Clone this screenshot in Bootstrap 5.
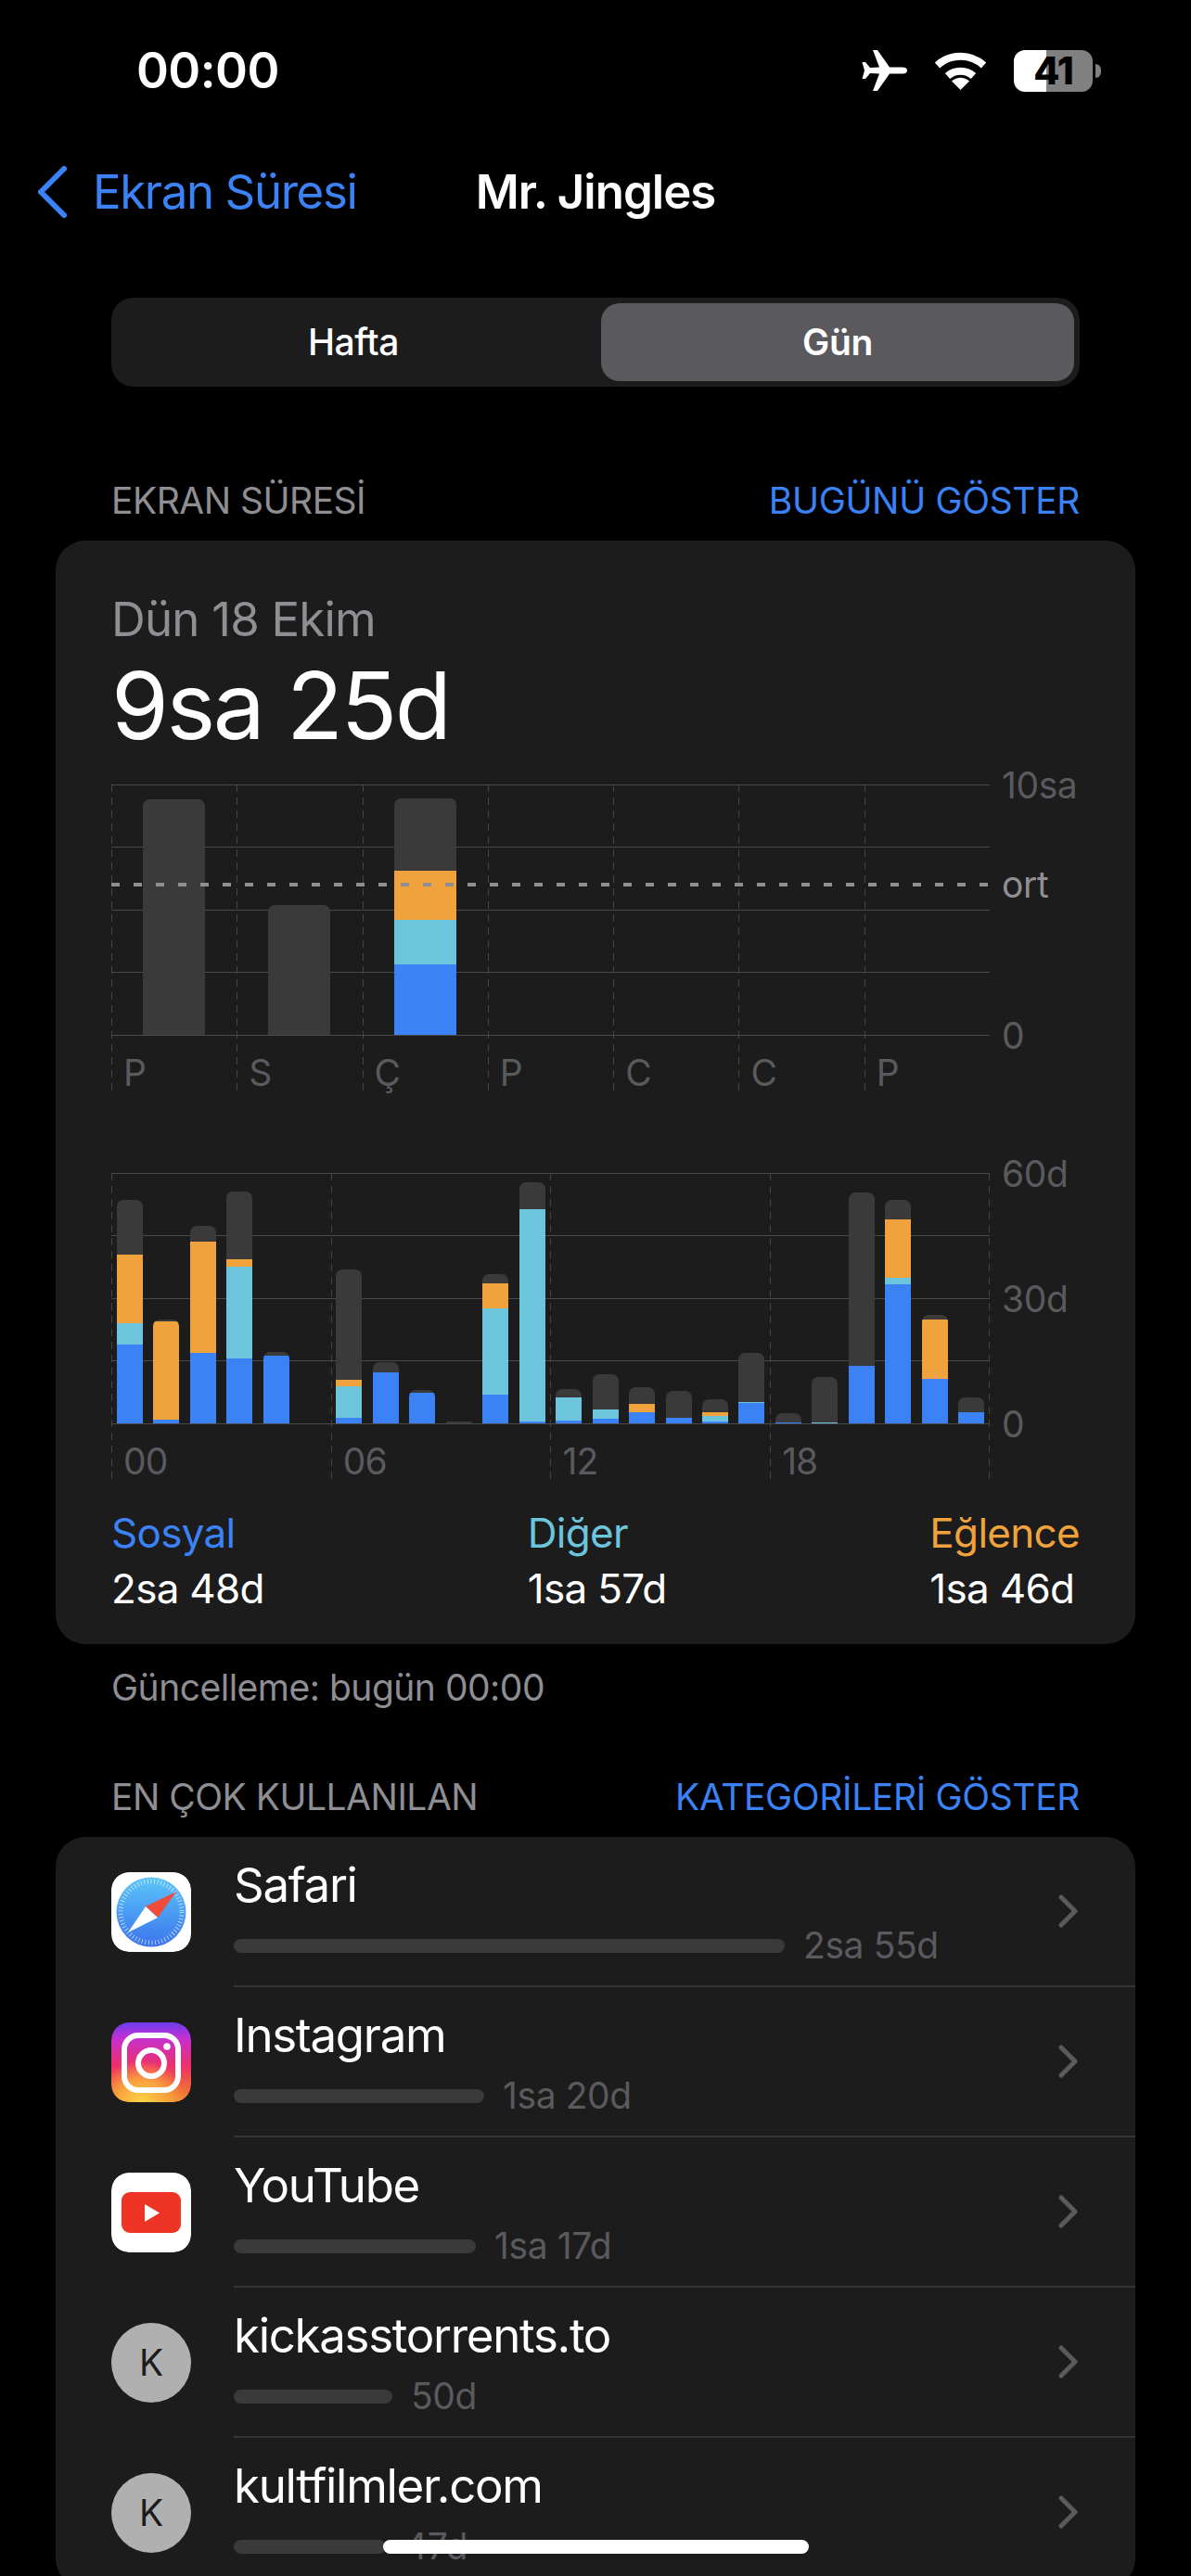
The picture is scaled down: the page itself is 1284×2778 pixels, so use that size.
<!DOCTYPE html>
<html lang="tr">
<head>
  <meta charset="UTF-8">
  <meta name="viewport" content="width=device-width, initial-scale=1.0">
  <title>Ekran Süresi</title>
  <link href="https://cdn.jsdelivr.net/npm/bootstrap@5.3.0/dist/css/bootstrap.min.css" rel="stylesheet">
  <style>
    body { background: #000; font-family: Inter, "Liberation Sans", sans-serif; color: #fff; }
    .screen { width: 1284px; height: 2778px; overflow: hidden; position: relative; }

    .status-row { height: 152px; padding: 0 97px 0 147px; }
    .clock { font-size: 53px; font-weight: 600; letter-spacing: -.6px; line-height: 1; }
    .status-icons { gap: 29px; }
    .batt-wrap { gap: 3px; }
    .batt { width: 85px; height: 45px; border-radius: 12px; background: linear-gradient(to right, #fff 41%, #808080 41%); color: #000; font-size: 41px; font-weight: 800; letter-spacing: -1px; line-height: 45px; text-align: center; }
    .batt-cap { width: 6px; height: 15px; border-radius: 0 8px 8px 0; background: #808080; }

    .top-nav { height: 110px; display: grid; grid-template-columns: 1fr auto 1fr; align-items: center; padding: 0 41px; font-size: 51px; letter-spacing: -1px; }
    .back-link { color: #3b82f7; text-decoration: none; gap: 28px; letter-spacing: -1.4px; }
    .nav-title { font-weight: 600; }

    .seg { margin: 59px 120px 0; height: 96px; padding: 6px; background: #1c1c1c; border-radius: 24px; }
    .seg .nav-item { width: 510px; }
    .seg .nav-link { height: 84px; line-height: 84px; padding: 0; color: #fff; font-size: 39px; font-weight: 500; letter-spacing: -.4px; border-radius: 20px; }
    .seg .nav-link.active { background: #5a5a5e; color: #fff; font-weight: 600; }

    .sec-head { margin: 98px 120px 0; height: 50px; font-size: 39px; line-height: 50px; letter-spacing: -.5px; color: #8e8e93; }
    .sec-head a { color: #3b82f7; text-decoration: none; letter-spacing: -.35px; }
    .sec-head.second { margin-top: 68px; }

    .panel { margin: 18px 60px 0; background: #1c1c1c; border: 0; border-radius: 32px; }
    .panel-stats { height: 1190px; padding: 55px 60px 0; }
    .date-line { font-size: 51px; line-height: 60px; color: #8e8e93; letter-spacing: -.8px; }
    .total-line { font-size: 100px; line-height: 110px; margin-top: 8px; font-weight: 400; letter-spacing: -2.5px; }

    .chart { height: 330px; }
    .chart-day { margin-top: 30px; }
    .chart-hour { margin-top: 89px; }
    .plot { width: 947px; height: 330px; background: repeating-linear-gradient(to bottom, #4a4a4c 0 1px, transparent 1px 67.5px) top left / 100% 271px no-repeat; position: relative; }
    .tick { flex: 1 1 0; min-width: 0; height: 330px; }
    .tick-line { background: repeating-linear-gradient(to bottom, #444 0 8px, transparent 8px 14px) left top / 1px 100% no-repeat; }
    .plot-end { background: repeating-linear-gradient(to bottom, #444 0 8px, transparent 8px 14px) right top / 1px 100% no-repeat; }
    .tick-line.plot-end { background-position: left top, right top; }
    .tick-area { height: 270px; }
    .bar { border-radius: 7px 7px 0 0; overflow: hidden; }
    .chart-day .bar { width: 67px; }
    .chart-hour .bar { width: 28px; }
    .tick-label { padding-left: 13px; margin-top: 17px; font-size: 39px; line-height: 48px; color: #5a5a5e; white-space: nowrap; letter-spacing: -.9px; }
    .avg-line { position: absolute; left: 0; right: 0; top: 106px; height: 4px; background: repeating-linear-gradient(to right, #8e8e93 0 9px, transparent 9px 24px); }
    .axis { height: 272px; padding-left: 13px; font-size: 39px; color: #5a5a5e; letter-spacing: -.4px; }
    .axis span { display: block; height: 2px; line-height: 2px; white-space: nowrap; }
    .axis .ort { margin-top: 105px; color: #8e8e93; }
    .axis .axis-end { margin-top: auto; }

    .legend { margin-top: 30px; font-size: 44px; line-height: 56px; letter-spacing: -.7px; }
    .legend-val { margin-top: 4px; }
    .c-blue { color: #3b82f7; }
    .c-cyan { color: #6cc5dc; }
    .c-orange { color: #f0a33c; }
    .s-blue { background: #3b82f7; }
    .s-cyan { background: #6cc5dc; }
    .s-orange { background: #f0a33c; }
    .s-gray { background: #3a3a3a; }

    .update-note { margin: 22px 120px 0; font-size: 39px; line-height: 50px; letter-spacing: -.5px; color: #8e8e93; }

    .apps { --bs-list-group-bg: transparent; --bs-list-group-border-width: 0; --bs-list-group-color: #fff; }
    .app-row { display: flex; padding: 0 0 0 60px; gap: 46px; }
    .app-icon { width: 86px; height: 86px; flex: none; margin-top: 38px; border-radius: 19px; display: block; }
    .avatar { width: 86px; height: 86px; flex: none; margin-top: 38px; border-radius: 50%; background: #b0b0b0; color: #1c1c1c; font-size: 39px; line-height: 86px; text-align: center; }
    .app-body { flex: 1; height: 162px; padding-right: 62px; border-bottom: 2px solid #353535; }
    .app-name { font-size: 51px; line-height: 60px; margin-top: 22px; letter-spacing: -1.3px; }
    .app-meter { height: 40px; margin-top: 15px; gap: 20px; font-size: 39px; color: #5a5a5e; letter-spacing: -.4px; }
    .meter-bar { height: 15px; background: #3a3a3a; border-radius: 8px; }

    .home-bar { position: absolute; left: 413px; top: 2739px; width: 459px; height: 15px; border-radius: 8px; background: #fff; }
  </style>
</head>
<body>
  <div class="screen">
    <div class="status-row d-flex justify-content-between align-items-center">
      <div class="clock">00:00</div>
      <div class="status-icons d-flex align-items-center">
        <svg width="49" height="44" viewBox="0 0 49 44"><path fill="#fff" d="M49 22C49 25 46 25.5 43 25.5L30 25.5L17 44L12 44L19 25.5L9 25L4 31L.5 31L3 22L.5 13L4 13L9 19L19 18.5L12 0L17 0L30 18.5L43 18.5C46 18.5 49 19 49 22Z"/></svg>
        <svg width="57" height="42" viewBox="0 0 57 42"><path fill="none" stroke="#fff" stroke-width="8" d="M3.500 15.500A37 37 0 0 1 53.500 15.500"/><path fill="none" stroke="#fff" stroke-width="8" d="M14.500 27A21 21 0 0 1 42.500 27"/><path fill="#fff" d="M28.500 42L19 32.500Q28.500 25 38 32.500Z"/></svg>
        <div class="batt-wrap d-flex align-items-center">
          <div class="batt">41</div>
          <div class="batt-cap"></div>
        </div>
      </div>
    </div>

    <nav class="top-nav">
      <a class="back-link d-flex align-items-center" href="#">
        <svg width="31" height="56" viewBox="0 0 31 56"><path fill="none" stroke="#3b82f7" stroke-width="6" stroke-linecap="round" stroke-linejoin="round" d="M28 3L3 28L28 53"/></svg>
        <span>Ekran Süresi</span>
      </a>
      <div class="nav-title">Mr. Jingles</div>
      <div></div>
    </nav>

    <ul class="seg nav nav-pills text-center justify-content-between">
      <li class="nav-item"><a class="nav-link" href="#">Hafta</a></li>
      <li class="nav-item"><a class="nav-link active" href="#">Gün</a></li>
    </ul>

    <div class="sec-head d-flex justify-content-between">
      <span>EKRAN SÜRESİ</span>
      <a href="#">BUGÜNÜ GÖSTER</a>
    </div>

    <div class="panel panel-stats card">
      <div class="date-line">Dün 18 Ekim</div>
      <div class="total-line">9sa 25d</div>

      <div class="chart chart-day d-flex">
        <div class="plot" id="dayPlot"></div>
        <div class="axis d-flex flex-column">
          <span>10sa</span>
          <span class="ort">ort</span>
          <span class="axis-end">0</span>
        </div>
      </div>

      <div class="chart chart-hour d-flex">
        <div class="plot" id="hourPlot"></div>
        <div class="axis d-flex flex-column justify-content-between">
          <span>60d</span>
          <span>30d</span>
          <span>0</span>
        </div>
      </div>

      <div class="legend d-flex justify-content-between">
        <div><div class="c-blue">Sosyal</div><div class="legend-val">2sa 48d</div></div>
        <div><div class="c-cyan">Diğer</div><div class="legend-val">1sa 57d</div></div>
        <div><div class="c-orange">Eğlence</div><div class="legend-val">1sa 46d</div></div>
      </div>
    </div>

    <div class="update-note">Güncelleme: bugün 00:00</div>

    <div class="sec-head second d-flex justify-content-between">
      <span>EN ÇOK KULLANILAN</span>
      <a href="#">KATEGORİLERİ GÖSTER</a>
    </div>

    <div class="panel card">
      <div class="apps list-group list-group-flush">
        <div class="app-row list-group-item">
          <svg class="app-icon" viewBox="0 0 86 86">
            <defs><linearGradient id="safBlue" x1="0" y1="0" x2="0" y2="1"><stop offset="0" stop-color="#5cc6fa"/><stop offset="1" stop-color="#3a73ec"/></linearGradient></defs>
            <rect width="86" height="86" rx="19" fill="#fff"/>
            <circle cx="43" cy="43" r="37.500" fill="url(#safBlue)"/>
            <circle cx="43" cy="43" r="33" fill="none" stroke="#fff" stroke-opacity=".75" stroke-width="5" stroke-dasharray=".8 2.800"/>
            <polygon points="70,21 50,49 37,37" fill="#ef4c3c"/>
            <polygon points="18,65 50,49 37,37" fill="#fff"/>
          </svg>
          <div class="app-body d-flex justify-content-between align-items-center">
            <div class="align-self-start"><div class="app-name">Safari</div><div class="app-meter d-flex align-items-center"><div class="meter-bar" style="width:594px"></div><span>2sa 55d</span></div></div>
            <svg width="21" height="36" viewBox="0 0 21 36"><path fill="none" stroke="#5a5a5e" stroke-width="5" stroke-linecap="round" stroke-linejoin="round" d="M3 3L18 18L3 33"/></svg>
          </div>
        </div>
        <div class="app-row list-group-item">
          <svg class="app-icon" viewBox="0 0 86 86">
            <defs>
              <linearGradient id="igBase" x1="0" y1="0" x2="0" y2="1"><stop offset="0" stop-color="#6a3df0"/><stop offset=".2" stop-color="#c62fd0"/><stop offset=".55" stop-color="#ee3068"/><stop offset=".8" stop-color="#f0643c"/><stop offset="1" stop-color="#f28a30"/></linearGradient>
              <radialGradient id="igGlow" cx=".38" cy="1.02" r=".55"><stop offset="0" stop-color="#fbd845"/><stop offset=".55" stop-color="#fbb040" stop-opacity=".8"/><stop offset="1" stop-color="#fbb040" stop-opacity="0"/></radialGradient>
            </defs>
            <rect width="86" height="86" rx="19" fill="url(#igBase)"/>
            <rect width="86" height="86" rx="19" fill="url(#igGlow)"/>
            <rect x="14" y="14" width="58" height="59" rx="15" fill="none" stroke="#fff" stroke-width="6"/>
            <circle cx="43" cy="44" r="14" fill="none" stroke="#fff" stroke-width="6"/>
            <circle cx="60" cy="26" r="3.800" fill="#fff"/>
          </svg>
          <div class="app-body d-flex justify-content-between align-items-center">
            <div class="align-self-start"><div class="app-name">Instagram</div><div class="app-meter d-flex align-items-center"><div class="meter-bar" style="width:270px"></div><span>1sa 20d</span></div></div>
            <svg width="21" height="36" viewBox="0 0 21 36"><path fill="none" stroke="#5a5a5e" stroke-width="5" stroke-linecap="round" stroke-linejoin="round" d="M3 3L18 18L3 33"/></svg>
          </div>
        </div>
        <div class="app-row list-group-item">
          <svg class="app-icon" viewBox="0 0 86 86">
            <rect width="86" height="86" rx="19" fill="#fff"/>
            <rect x="11" y="21" width="64" height="44" rx="9" fill="#ee3424"/>
            <polygon points="36,34 36,53 52,43.500" fill="#fff"/>
          </svg>
          <div class="app-body d-flex justify-content-between align-items-center">
            <div class="align-self-start"><div class="app-name">YouTube</div><div class="app-meter d-flex align-items-center"><div class="meter-bar" style="width:261px"></div><span>1sa 17d</span></div></div>
            <svg width="21" height="36" viewBox="0 0 21 36"><path fill="none" stroke="#5a5a5e" stroke-width="5" stroke-linecap="round" stroke-linejoin="round" d="M3 3L18 18L3 33"/></svg>
          </div>
        </div>
        <div class="app-row list-group-item">
          <div class="avatar">K</div>
          <div class="app-body d-flex justify-content-between align-items-center">
            <div class="align-self-start"><div class="app-name">kickasstorrents.to</div><div class="app-meter d-flex align-items-center"><div class="meter-bar" style="width:171px"></div><span>50d</span></div></div>
            <svg width="21" height="36" viewBox="0 0 21 36"><path fill="none" stroke="#5a5a5e" stroke-width="5" stroke-linecap="round" stroke-linejoin="round" d="M3 3L18 18L3 33"/></svg>
          </div>
        </div>
        <div class="app-row list-group-item">
          <div class="avatar">K</div>
          <div class="app-body d-flex justify-content-between align-items-center">
            <div class="align-self-start"><div class="app-name">kultfilmler.com</div><div class="app-meter d-flex align-items-center"><div class="meter-bar" style="width:164px"></div><span>47d</span></div></div>
            <svg width="21" height="36" viewBox="0 0 21 36"><path fill="none" stroke="#5a5a5e" stroke-width="5" stroke-linecap="round" stroke-linejoin="round" d="M3 3L18 18L3 33"/></svg>
          </div>
        </div>
      </div>
    </div>

    <div class="home-bar"></div>
  </div>

  <script src="https://cdn.jsdelivr.net/npm/bootstrap@5.3.0/dist/js/bootstrap.bundle.min.js"></script>
  <script>
    document.addEventListener('DOMContentLoaded', function() {
      const segClasses = ['s-blue', 's-cyan', 's-orange', 's-gray'];

      // each entry: height in px of blue, cyan, orange, gray
      const days = [
        [0, 0, 0, 254], [0, 0, 0, 140], [76, 48, 53, 78],
        [], [], [], []
      ];
      const dayLabels = ['P', 'S', 'Ç', 'P', 'C', 'C', 'P'];

      // tops of the segments, measured on a 3x crop with baseline at 886
      const hourTops = [
        [630, 562, 339, 162], [873, 873, 555, 549], [657, 657, 297, 246], [675, 378, 354, 135],
        [666, 666, 666, 654], [], [867, 766, 744, 387], [720, 720, 720, 687],
        [786, 786, 786, 777], [886, 886, 886, 879], [792, 514, 432, 402], [879, 192, 192, 105],
        [876, 801, 801, 774], [870, 840, 840, 726], [849, 849, 822, 768], [867, 867, 867, 780],
        [879, 861, 849, 807], [819, 816, 816, 657], [882, 882, 882, 852], [886, 882, 882, 735],
        [699, 699, 699, 138], [435, 414, 225, 162], [741, 741, 549, 534], [849, 849, 849, 801]
      ];
      const hours = hourTops.map(function(tops) {
        let prev = 886;
        return tops.map(function(top) {
          const h = (prev - top) / 3;
          prev = top;
          return h;
        });
      });

      function fillPlot(plot, data, labelAt, lineEvery) {
        data.forEach(function(segs, i) {
          const tick = document.createElement('div');
          tick.className = 'tick';
          if (i % lineEvery === 0) tick.classList.add('tick-line');
          if (i === data.length - 1) tick.classList.add('plot-end');

          const area = document.createElement('div');
          area.className = 'tick-area d-flex justify-content-center align-items-end';
          if (segs.length) {
            const bar = document.createElement('div');
            bar.className = 'bar d-flex flex-column-reverse';
            segs.forEach(function(h, s) {
              if (!h) return;
              const seg = document.createElement('div');
              seg.className = segClasses[s];
              seg.style.height = h + 'px';
              bar.appendChild(seg);
            });
            area.appendChild(bar);
          }
          tick.appendChild(area);

          if (labelAt[i]) {
            const label = document.createElement('div');
            label.className = 'tick-label';
            label.textContent = labelAt[i];
            tick.appendChild(label);
          }
          plot.appendChild(tick);
        });
        plot.classList.add('d-flex');
      }

      const dayPlot = document.getElementById('dayPlot');
      fillPlot(dayPlot, days, dayLabels, 1);
      const avg = document.createElement('div');
      avg.className = 'avg-line';
      dayPlot.appendChild(avg);

      fillPlot(document.getElementById('hourPlot'), hours, { 0: '00', 6: '06', 12: '12', 18: '18' }, 6);
    });
  </script>
</body>
</html>
